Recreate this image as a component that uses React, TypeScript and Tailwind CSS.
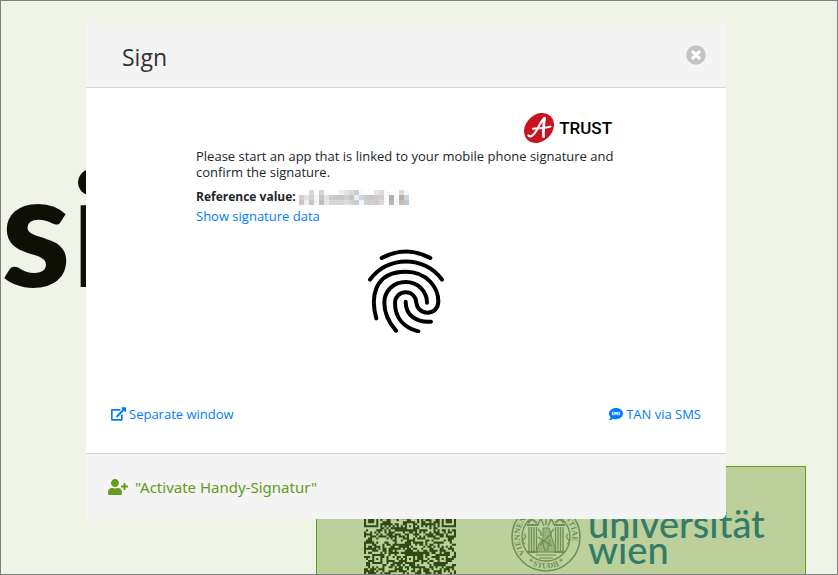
import type { ReactNode } from 'react';
import { FaSms, FaTimesCircle, FaUserPlus } from 'react-icons/fa';

const QR_SIZE = 45;
const FINDERS = [[0, 0], [38, 0], [0, 38]];
const ALIGNMENTS = [[22, 6], [6, 22], [22, 22], [38, 22], [22, 38], [38, 38]];

// rows of the censored reference value, one colour per block
const CENSORED = [
  'ffffff ffffff dcd8d8 ffffff d6d4d6 f4fafd ffffff ffffff f2eeec dfe3ec dedada c9ced3 f6fbfe ffffff ffffff e9e4e4 d9dade f6fbfe ffffff ffffff dcdade f2f6fa'.split(' '),
  'd6cfcb dbe2ea cfd0d6 f6f6f6 c6c4c6 dfe2e4 cfcaca c9c6c6 c4c6cc cfd0d4 c7c4c4 e6efe8 cfd2e4 cbc9c9 cdc8c8 cbccd2 dacbcb f4fafd b3adab f8f8f8 b8b0a8 ccd6de'.split(' '),
  'c9c6c8 f6eee8 c9c6c8 eef2f6 bfbdbf e9e6e4 d9d6d6 dcd6d2 d6d8dc e2dcd8 d4d4d8 c9ccd0 f0f6fa d2cfd2 d4d0d0 cdcdd2 e0d8d4 f4fafd bab4b2 f4f8fc c4beba c6c6c8'.split(' '),
];

function isDark(x: number, y: number) {
  for (const [fx, fy] of FINDERS) {
    const dx = x - fx;
    const dy = y - fy;
    if (dx >= -1 && dx <= 7 && dy >= -1 && dy <= 7) {
      const ring = Math.max(Math.abs(dx - 3), Math.abs(dy - 3));
      return ring === 3 || ring < 2;
    }
  }
  for (const [cx, cy] of ALIGNMENTS) {
    const ring = Math.max(Math.abs(x - cx), Math.abs(y - cy));
    if (ring <= 2) return ring !== 1;
  }
  if (y === 6 || x === 6) return (x + y) % 2 === 0;
  const n = Math.sin(x * 12.9898 + y * 78.233) * 43758.5453;
  return n - Math.floor(n) > 0.48;
}

function QrCode() {
  let d = '';
  for (let y = 0; y < QR_SIZE; y++) {
    for (let x = 0; x < QR_SIZE; x++) {
      if (isDark(x, y)) d += `M${x} ${y}h1v1h-1z`;
    }
  }
  return (
    <svg viewBox="0 0 45 45" className="mt-[46px] size-[92px] shrink-0 text-[#2f4a12]" role="img" aria-label="QR code">
      <path d={d} fill="currentColor" />
    </svg>
  );
}

function Seal() {
  return (
    <svg viewBox="-35 -35 70 70" className="mt-[35px] size-[70px] shrink-0 text-[#6f8f58]" fill="none" stroke="currentColor">
      <circle r="34" strokeWidth="1.6" />
      <circle r="24" strokeWidth="1.4" />
      <path id="seal-top" d="M-26.4 0A26.4 26.4 0 0 1 26.4 0A26.4 26.4 0 0 1 -26.4 0" stroke="none" transform="rotate(-38)" />
      <path id="seal-bottom" d="M-31.4 0A31.4 31.4 0 0 0 31.4 0" stroke="none" />
      <g fill="currentColor" stroke="none" fontSize="8" fontWeight="700" fontFamily="Liberation Serif, serif">
        <text><textPath href="#seal-top">VIENNENSIS · SAPIENTIAE</textPath></text>
        <text textAnchor="middle"><textPath href="#seal-bottom" startOffset="50%">* STUDII *</textPath></text>
      </g>
      <path d="M-17-10v24M-14.500-10v24M-12-10v24M-9.500-10v24M17-10v24M14.500-10v24M12-10v24M9.500-10v24" strokeWidth="1.300" />
      <path d="M-19-12h11M8-12h11M-19 15h11M8 15h11M-18-14l4-4 5 4M18-14l-4-4-5 4" strokeWidth="1.800" />
      <path d="M-8-12C-6-22 6-22 8-12M0-20v8M-5-18l3 7M5-18l-3 7M-8-8q4 3 3 7M8-8q-4 3-3 7" strokeWidth="1.400" />
      <path d="M-3-9h6l2 7 3 10 2 7h-20l3-8 4-6z" fill="currentColor" fillOpacity="0.45" strokeWidth="1" />
      <path d="M-8 0l14 9M-6 8L5-3M-10 18h20M-7 21h14M-4 4l3 10M4 3L1 14" strokeWidth="1.200" />
      <path d="M-22-3q3 2 0 5t1 5M22-3q-3 2 0 5t-1 5" strokeWidth="1.200" />
    </svg>
  );
}

function TrustLogo() {
  return (
    <div className="mr-1 flex items-center gap-[5px] self-end">
      <svg viewBox="0 0 30 30" className="size-[30px]">
        <ellipse cx="15" cy="15" rx="16.600" ry="13.200" transform="rotate(-45 15 15)" fill="#c8141f" />
        <g fill="none" stroke="#fff" strokeLinecap="round" strokeLinejoin="round">
          <path d="M4.500 22.500C7 25 10 21.500 12.500 17.500C15 13 17.500 7.500 20.500 5.200" strokeWidth="2.200" />
          <path d="M20.500 5.200C19.800 11 19 17 19.600 23.600" strokeWidth="2.800" />
          <path d="M9 15.800C14 15.400 20 15.200 26.500 13.600" strokeWidth="2" />
        </g>
      </svg>
      <span className="font-['Roboto',sans-serif] text-[17px] leading-[30px] font-medium text-black">TRUST</span>
    </div>
  );
}

function Fingerprint() {
  return (
    <svg viewBox="55 41 228 252" className="mx-auto mt-6 h-[84px] w-[76px]" fill="none" stroke="#000" strokeWidth="12" strokeLinecap="round">
      <path d="M96 68Q168 29 242 68" />
      <path d="M61 133C112 60 226 60 277 133" />
      <path d="M80 249C63 190 70 109 168 109C235 109 266 160 266 198C266 220 251 232 233 232C215 232 202 219 200 202C198 183 186 171 168 171C150 171 136 185 136 203C136 248 163 277 206 288" />
      <path d="M139 286C112 255 104 230 104 202C104 165 133 140 168 140C205 140 232 168 232 202" />
      <path d="M168 199C168 240 200 262 244 259" />
    </svg>
  );
}

function CensoredValue() {
  return (
    <svg viewBox="0 0 22 3" className="h-[15px] w-[110px]" shapeRendering="crispEdges" role="img" aria-label="hidden">
      {CENSORED.map((row, y) =>
        row.map((color, x) => <rect key={`${x}-${y}`} x={x} y={y} width="1" height="1" fill={`#${color}`} />)
      )}
    </svg>
  );
}

function WindowIcon() {
  return (
    <svg viewBox="0 0 576 512" className="h-[14px] w-[15px]" fill="currentColor">
      <path d="M576 24v127.984c0 21.461-25.960 31.980-40.971 16.971l-35.707-35.709-243.523 243.523c-9.373 9.373-24.568 9.373-33.941 0l-22.627-22.627c-9.373-9.373-9.373-24.569 0-33.941L442.756 76.676l-35.703-35.705C391.982 25.900 402.656 0 424.024 0H552c13.255 0 24 10.745 24 24zM407.029 270.794l-16 16A23.999 23.999 0 0 0 384 303.765V448H64V128h264a24.003 24.003 0 0 0 16.970-7.029l16-16C376.089 89.851 365.381 64 344 64H48C21.490 64 0 85.490 0 112v352c0 26.510 21.490 48 48 48h352c26.510 0 48-21.490 48-48V287.764c0-21.382-25.852-32.090-40.971-16.970z" />
    </svg>
  );
}

function IconLink({ icon, children }: { icon: ReactNode; children: ReactNode }) {
  return (
    <a href="#" className="flex items-center gap-[3px] leading-[18px] text-[#007bff]">
      {icon}
      {children}
    </a>
  );
}

export default function App() {
  return (
    <div className="relative flex h-screen flex-col overflow-hidden border border-[#7f7f7f] bg-[#f0f4e6] font-['Open_Sans',sans-serif] text-[13px] text-[#212529]">
      <h1 className="h-[465px] shrink-0 pt-[146px] font-['Lato',sans-serif] text-[158px] leading-none font-black text-[#0d1002]">si</h1>
      <div className="mr-[31px] ml-auto flex min-h-0 w-[490px] flex-1 items-start overflow-hidden border border-b-0 border-[#669c24] bg-[#bbd09b] pl-[47px]">
        <QrCode />
        <div className="ml-[55px] flex gap-[7px]">
          <Seal />
          <p className="mt-[43px] font-['Lato',sans-serif] text-[38px] leading-[26px] font-medium text-[#357c68]">
            universität
            <br />
            wien
          </p>
        </div>
      </div>

      <div className="absolute inset-0 flex items-start justify-center pt-[22px] pr-[26px]">
        <div role="dialog" aria-labelledby="dialog-title" className="w-full max-w-[640px] overflow-hidden rounded-md bg-white">
          <header className="flex h-[65px] items-center justify-between border-b border-[#d8d8d8] bg-[#f4f4f4] pr-5 pb-px pl-9">
            <h2 id="dialog-title" className="pt-1 text-[23px] leading-8 text-[#333]">Sign</h2>
            <button type="button" aria-label="Close" className="rounded-full bg-white text-[#c4c4c4]">
              <FaTimesCircle className="size-5" />
            </button>
          </header>

          <main className="px-[25px] pt-[25px] pb-[30px]">
            <div className="mx-auto flex max-w-[420px] flex-col">
              <TrustLogo />
              <p className="mt-[5px] leading-4">
                Please start an app that is linked to your mobile phone signature and confirm the signature.
              </p>
              <div className="mt-2 flex items-center gap-[3px] leading-[18px]">
                <strong className="text-xs leading-[18px]">Reference value:</strong>
                <CensoredValue />
              </div>
              <a href="#" className="mt-px self-start leading-[18px] text-[#007bff]">Show signature data</a>
            </div>
            <Fingerprint />
            <div className="mt-[72px] flex justify-between">
              <IconLink icon={<WindowIcon />}>Separate window</IconLink>
              <IconLink icon={<FaSms className="size-[14px]" />}>TAN via SMS</IconLink>
            </div>
          </main>

          <footer className="flex h-[66px] items-center border-t border-[#d8d8d8] bg-[#f4f4f4] px-[22px]">
            <a href="#" className="flex items-center gap-[7px] font-['Noto_Sans',sans-serif] text-[15px] leading-5 text-[#629c19]">
              <FaUserPlus className="h-4 w-5" />
              "Activate Handy-Signatur"
            </a>
          </footer>
        </div>
      </div>
    </div>
  );
}
